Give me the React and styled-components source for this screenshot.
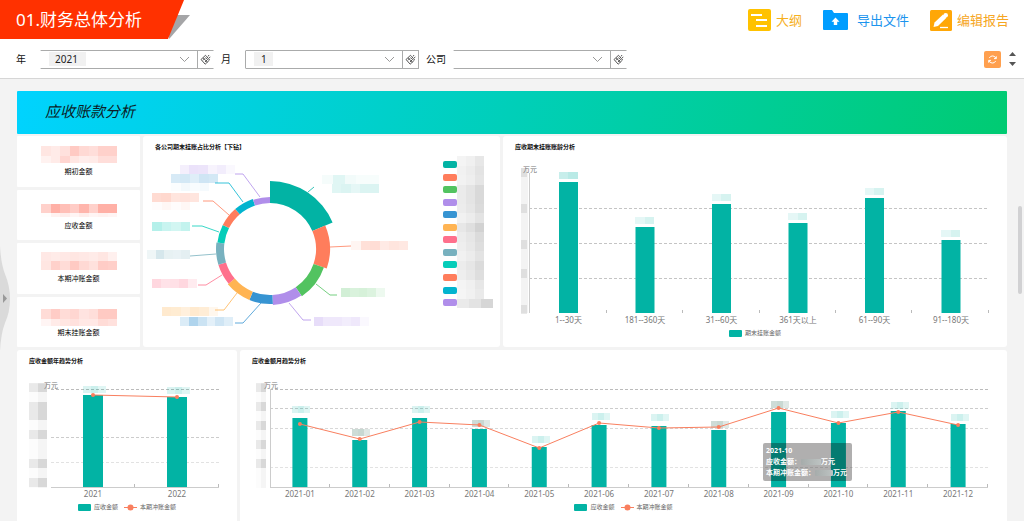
import styled, { createGlobalStyle } from 'styled-components';

const TEAL = '#02b3a4';
const CORAL = '#f97f5f';

const GlobalStyle = createGlobalStyle`
  * {
    box-sizing: border-box;
  }

  body {
    margin: 0;
    overflow: hidden;
    background: #f3f3f3;
    color: #111;
    font-family: "Noto Sans", "Noto Sans CJK SC", sans-serif;
  }

  button,
  select {
    font-family: inherit;
  }
`;

const Page = styled.div`
  position: relative;
  height: 100vh;
  overflow: hidden;
`;

const Head = styled.header`
  background: #fff;
  border-bottom: 1px solid #d6d6d6;
`;

const TitleBar = styled.div`
  display: flex;
  justify-content: space-between;
  height: 40px;
`;

const Ribbon = styled.div`
  position: relative;
  height: 39px;
  padding-right: 6px;

  &::before {
    content: '';
    position: absolute;
    right: 0;
    bottom: 0;
    width: 22px;
    height: 24px;
    background: #a5a5a7;
    clip-path: polygon(0 0, 100% 0, 5% 100%);
  }
`;

const Title = styled.h1`
  position: relative;
  height: 100%;
  margin: 0;
  padding: 0 42px 0 16px;
  background: #ff3100;
  clip-path: polygon(0 0, 100% 0, calc(100% - 16px) 100%, 0 100%);
  color: #fff;
  font-size: 17px;
  font-weight: 400;
  line-height: 39px;
  white-space: nowrap;
`;

const Actions = styled.nav`
  display: flex;
  align-items: center;
  gap: 21px;
  padding-right: 15px;
`;

const Action = styled.button`
  display: flex;
  align-items: center;
  gap: ${p => p.$gap || 5}px;
  padding: 0;
  border: 0;
  background: none;
  color: ${p => p.$color};
  font-size: 13px;
  line-height: 20px;
  white-space: nowrap;
`;

const Filters = styled.form`
  display: flex;
  align-items: center;
  gap: 7px;
  height: 38px;
  padding: 0 8px 0 16px;
`;

const Field = styled.div`
  display: flex;
  align-items: center;
`;

const FieldLabel = styled.label`
  min-width: 17px;
  margin-right: 7px;
  font-size: 10px;
  line-height: 18px;
`;

const SelectBox = styled.div`
  display: grid;
  align-items: center;
  width: 158px;

  > * {
    grid-area: 1 / 1;
  }

  > svg {
    justify-self: end;
    margin-right: 8px;
    pointer-events: none;
  }
`;

const Select = styled.select`
  appearance: none;
  width: 100%;
  height: 19px;
  padding: 0 20px 0 ${p => p.$inset}px;
  border: 1px solid #aaabab;
  border-left-color: ${p => (p.$open ? 'transparent' : '#aaabab')};
  border-radius: 1px;
  background: linear-gradient(#f1f1f1, #f1f1f1) 8px center / ${p => p.$chip}px 14px no-repeat #fff;
  color: #222;
  font-size: 10px;
`;

const ClearButton = styled.button`
  display: grid;
  place-items: center;
  width: 17px;
  height: 19px;
  margin-left: -1px;
  padding: 0;
  border: 1px solid #aaabab;
  border-right-color: ${p => (p.$open ? 'transparent' : '#aaabab')};
  background: #fff;
`;

const FilterTools = styled.div`
  display: flex;
  align-items: center;
  gap: 8px;
  margin-left: auto;
`;

const RefreshButton = styled.button`
  display: grid;
  place-items: center;
  width: 17px;
  height: 17px;
  padding: 0;
  border: 0;
  border-radius: 2px;
  background: #ffa04f;
`;

const SortButton = styled.button`
  display: grid;
  padding: 0;
  border: 0;
  background: none;
`;

const Main = styled.main`
  padding: 12px 17px 0;
`;

const Banner = styled.h2`
  height: 43px;
  margin: 0 0 2px;
  padding-left: 28px;
  border-radius: 1px;
  background: linear-gradient(110deg, #00d3ff, #00cb72);
  color: #0c1c26;
  font-size: 15px;
  font-style: italic;
  font-weight: 400;
  line-height: 41px;
`;

const TopRow = styled.div`
  display: grid;
  grid-template-columns: 123fr 357fr 504fr;
  gap: 3px;
  margin-bottom: 3px;
`;

const BottomRow = styled.div`
  display: grid;
  grid-template-columns: 220fr 767fr;
  gap: 3px;
`;

const Panel = styled.section`
  min-width: 0;
  min-height: ${p => p.$minHeight || 0}px;
  border-radius: 3px;
  background: #fff;
`;

const PanelTitle = styled.h3`
  height: 20px;
  margin: 0;
  padding: 4px 12px 0;
  font-size: 6px;
  font-weight: 700;
  line-height: 14px;
`;

const KpiColumn = styled.div`
  display: grid;
  grid-auto-rows: 1fr;
  gap: 3px;
`;

const KpiCard = styled.section`
  display: flex;
  flex-direction: column;
  align-items: center;
  padding-top: 8px;
  border-radius: 1px;
  background: #fff;
`;

const KpiLabel = styled.p`
  margin: 1px 0 0;
  color: #000;
  font-size: 7px;
  line-height: 12px;
`;

const ChartBox = styled.div`
  position: relative;
`;

const Chart = styled.svg`
  display: block;
  width: 100%;
  height: auto;
`;

const AxisText = styled.text`
  fill: #777;
  font-size: ${p => p.$size || 8}px;
`;

const Legend = styled.ul`
  display: flex;
  justify-content: center;
  gap: 6px;
  margin: 0;
  padding: 0;
  list-style: none;
`;

const LegendItem = styled.li`
  display: flex;
  align-items: center;
  gap: 3px;
  color: #666;
  font-size: 6px;
  line-height: 14px;
`;

const Swatch = styled.span`
  width: 13px;
  height: 7px;
  border-radius: 1px;
  background: ${TEAL};
`;

const Tooltip = styled.div`
  position: absolute;
  top: 73px;
  right: 155px;
  width: 89px;
  padding: 2px 3px 3px;
  border-radius: 2px;
  background: rgba(10, 5, 5, .32);
  color: #fff;
  font-size: 7px;
  font-weight: 700;
  line-height: 11px;
  white-space: nowrap;
`;

const TooltipRow = styled.div`
  display: flex;
  align-items: center;
`;

const Redacted = styled.span`
  width: ${p => p.$width}px;
  height: 6px;
  border-radius: 1px;
  background: linear-gradient(90deg, #a6acab, #bdc3c2);
`;

const ScrollThumb = styled.div`
  position: absolute;
  top: 206px;
  right: 2px;
  width: 4px;
  height: 88px;
  border-radius: 2px;
  background: #d1d1d3;
`;

const DrawerHandle = styled.button`
  position: absolute;
  top: 246px;
  left: 0;
  padding: 0;
  border: 0;
  background: none;

  svg {
    display: block;
  }
`;

const OutlineIcon = () => (
  <svg width="23" height="22" viewBox="0 0 23 22">
    <rect width="23" height="22" rx="2" fill="#ffc200" />
    <path d="M3 6h11M8 11h11M8 17h11" stroke="#fff" strokeWidth="2" />
  </svg>
);

const ExportIcon = () => (
  <svg width="25" height="20" viewBox="0 0 25 20">
    <path d="M1 0h8l2 3h13q1 0 1 1v15q0 1-1 1H1q-1 0-1-1V1q0-1 1-1z" fill="#009dff" />
    <path d="M12.500 7.500l4 4.200h-2.300V15h-3.400v-3.300H8.500z" fill="#fff" />
  </svg>
);

const EditIcon = () => (
  <svg width="22" height="21" viewBox="0 0 22 21">
    <rect width="22" height="21" rx="1.500" fill="#ffa707" />
    <path d="M3.500 17l1-4.500L13 4.500l3.500 3.300L8 16z" fill="#fff" />
    <circle cx="15.700" cy="5.200" r="2.300" fill="#fff" />
    <path d="M10 17.500h8" stroke="#fff" strokeWidth="1.300" />
  </svg>
);

const Chevron = () => (
  <svg width="11" height="7" viewBox="0 0 11 7">
    <path d="M1 1l4.500 4.500L10 1" fill="none" stroke="#999" />
  </svg>
);

const BroomIcon = () => (
  <svg width="11" height="11" viewBox="0 0 11 11" fill="none" stroke="#444" strokeWidth=".9">
    <path d="M8 2.500L9 1M9 4l1.300-1M1 5.500l4.500-4.200 1 1.200 2 2L9.500 6 5.200 10.200zM3 3.800l4.500 4.400M3 6.300l2-2M5 8l2-2M5.500 3.500L8 5.800" />
  </svg>
);

const RefreshIcon = () => (
  <svg width="9" height="9" viewBox="0 0 9 9" fill="none" stroke="#fff">
    <path d="M8 3.500A3.600 3.600 0 0 0 1.300 3M1 5.500a3.600 3.600 0 0 0 6.700.5" />
    <path d="M8.300 1.300v2.300H6M.7 7.700V5.400H3" />
  </svg>
);

const SortIcon = () => (
  <svg width="7" height="14" viewBox="0 0 7 14" fill="#555">
    <path d="M0 4l3.500-4L7 4zM0 10h7l-3.500 4z" />
  </svg>
);

// pixelated strip that stands in for a masked value
const Mosaic = ({ x, y, w, h = 9, color, shades = [.1, .2, .14, .2, .1] }) => (
  <g fill={color} shapeRendering="crispEdges">
    {shades.map((s, i) => (
      <rect key={i} x={x + (w / shades.length) * i} y={y} width={w / shades.length} height={h} opacity={s} />
    ))}
  </g>
);

const kpis = [
  { label: '期初金额', rows: [[2, 10, [.2, .16, .24, .42, .3, .26, .36, .36]], [12, 7, [.1, .16, .32, .2, .14, .16, .26, .26]]] },
  { label: '应收金额', rows: [[6, 9, [.36, .62, .5, .4, .58, .36, .62, .62]], [15, 4, [.02, .1, .14, .08, .14, .08, .1, .08]]] },
  { label: '本期冲账金额', rows: [[1, 9, [.18, .16, .18, .2, .18, .16, .2, .12]], [10, 9, [.2, .36, .28, .42, .3, .24, .4, .38]]] },
  { label: '期末挂账金额', rows: [[4, 10, [.28, .4, .28, .32, .22, .26, .42, .42]], [14, 7, [.08, .16, .2, .24, .18, .18, .28, .24]]] },
];

const slices = [
  { to: 67, r: 68, color: '#02b3a4', line: '165,36 171,31' },
  { to: 109, r: 60, color: '#ff7d5c', line: '187,91 208,90' },
  { to: 146, r: 57, color: '#52c360', line: '173,128 187,139 194,139' },
  { to: 177, r: 56, color: '#b08eea', line: '146,147 160,164 168,164' },
  { to: 202, r: 55, color: '#3794d2', line: '118,147 100,167 92,167' },
  { to: 230, r: 55, color: '#ffb453', line: '94,137 81,154 72,154' },
  { to: 253, r: 54, color: '#ff708c', line: '79,119 63,129 55,129' },
  { to: 277, r: 54, color: '#78b1bf', line: '73,98 47,100' },
  { to: 297, r: 53, color: '#05cdb9', line: '76,76 59,70 49,70' },
  { to: 319, r: 53, color: '#ff7d5c', line: '86,59 70,45 60,45' },
  { to: 341, r: 53, color: '#02b4cf', line: '100,46 86,27 72,27' },
  { to: 360, r: 52, color: '#b08eea', line: '117,41 100,18 92,18' },
];

const sliceLabels = [
  { x: 179, y: 19, w: 57, color: '#02b3a4', shades: [.04, .12, .05, .03, .03] },
  { x: 189, y: 28, w: 47, color: '#02b3a4', shades: [.12, .14, .1, .14, .14] },
  { x: 208, y: 85, w: 57, color: '#ff7d5c', shades: [.08, .24, .26, .16, .2, .18] },
  { x: 198, y: 132, w: 44, color: '#52c360', shades: [.26, .22, .24, .2, .1] },
  { x: 171, y: 161, w: 55, color: '#b08eea', shades: [.3, .2, .2, .16, .2, .06] },
  { x: 37, y: 161, w: 53, color: '#3794d2', shades: [.18, .4, .26, .14, .24, .16] },
  { x: 19, y: 151, w: 56, color: '#ffb453', shades: [.28, .26, .2, .28, .24, .1] },
  { x: 9, y: 123, w: 45, color: '#ff708c', shades: [.28, .2, .22, .28, .14] },
  { x: 4, y: 94, w: 43, color: '#78b1bf', shades: [.12, .3, .18, .16, .2] },
  { x: 9, y: 66, w: 38, color: '#05cdb9', shades: [.3, .22, .18, .24] },
  { x: 9, y: 37, w: 47, color: '#ff7d5c', shades: [.28, .3, .2, .22, .2] },
  { x: 9, y: 46, w: 38, h: 8, color: '#ff7d5c', shades: [.02, .06, .02, .06] },
  { x: 28, y: 18, w: 47, color: '#3794d2', shades: [.2, .22, .16, .24, .22] },
  { x: 28, y: 27, w: 38, h: 8, color: '#3794d2', shades: [.02, .06, .03, .05] },
  { x: 37, y: 9, w: 55, color: '#b08eea', shades: [.14, .26, .24, .1, .16, .06] },
];

const legendShades = [.16, .2, .18, .28, .28, .26, .2, .34, .26, .24, .2, .26, .24, .16, .14, .3];

const polar = (deg, r) => {
  const a = (deg * Math.PI) / 180;
  return `${127 + r * Math.sin(a)} ${93 - r * Math.cos(a)}`;
};

const arc = (from, to, r) =>
  `M${polar(from, r)} A${r} ${r} 0 0 1 ${polar(to, r)} L${polar(to, 46)} A46 46 0 0 0 ${polar(from, 46)}Z`;

const RoseChart = () => (
  <Chart viewBox="0 0 357 191" role="img" aria-label="各公司期末挂账占比分析">
    {sliceLabels.map((l, i) => <Mosaic key={i} {...l} />)}
    {slices.map((s, i) => (
      <g key={s.to}>
        <path d={arc(i ? slices[i - 1].to : 0, s.to, s.r)} fill={s.color} />
        <polyline points={s.line} fill="none" stroke={s.color} strokeWidth=".8" />
        <rect x="300" y={Math.round(5 + i * 12.55)} width="14" height="7" rx="2" fill={s.color} />
      </g>
    ))}
    {legendShades.map((s, i) => (
      <Mosaic
        key={i}
        x={314}
        y={i * 9.5}
        w={i === 15 ? 36 : 27}
        h={9.5}
        color="#888"
        shades={[s * .6, s * .8, s + .04]}
      />
    ))}
  </Chart>
);

const ages = [
  { name: '1--30天', top: 26 },
  { name: '181--360天', top: 71 },
  { name: '31--60天', top: 48 },
  { name: '361天以上', top: 67 },
  { name: '61--90天', top: 42 },
  { name: '91--180天', top: 84 },
];

const AgeChart = () => (
  <Chart viewBox="-1 0 504 170" role="img" aria-label="应收期末挂账账龄分析">
    {[52, 87, 122].map(y => (
      <path key={y} d={`M25 ${y}.5H484`} stroke="#c4c4c4" strokeDasharray="3 2" />
    ))}
    <path d="M25.5 17V157" stroke="#ccc" />
    <Mosaic x={17} y={12} w={7} h={145} color="#999" shades={[.12]} />
    {[12, 48, 84, 113, 149].map(y => <Mosaic key={y} x={17} y={y} w={6} color="#999" shades={[.22]} />)}
    <AxisText x="19" y="16" $size={7}>万元</AxisText>
    {ages.map((a, i) => {
      const cx = 64.5 + i * 76.5;
      return (
        <g key={a.name}>
          <rect x={cx - 9.5} y={a.top} width="19" height={157 - a.top} fill={TEAL} />
          <Mosaic x={cx - 10} y={a.top - 10} w={19} h={7} color={TEAL} shades={i ? [.1, .16] : [.22, .28]} />
          <path d={`M${Math.round(102 + i * 76.3)}.5 154v3`} stroke="#bbb" />
          <AxisText x={cx} y="167" textAnchor="middle">{a.name}</AxisText>
        </g>
      );
    })}
  </Chart>
);

const years = [
  { name: '2021', top: 25, line: 25, label: 16 },
  { name: '2022', top: 27, line: 27, label: 17 },
];

const months = [
  { name: '2021-01', top: 48, line: 54, label: 36 },
  { name: '2021-02', top: 70, line: 69, label: 59, gray: true },
  { name: '2021-03', top: 48, line: 52, label: 36 },
  { name: '2021-04', top: 59, line: 55, label: 50, gray: true },
  { name: '2021-05', top: 77, line: 78, label: 66 },
  { name: '2021-06', top: 55, line: 53, label: 43 },
  { name: '2021-07', top: 56, line: 58, label: 44 },
  { name: '2021-08', top: 60, line: 57, label: 51, gray: true },
  { name: '2021-09', top: 42, line: 38, label: 31, gray: true },
  { name: '2021-10', top: 53, line: 53, label: 41 },
  { name: '2021-11', top: 41, line: 42, label: 32 },
  { name: '2021-12', top: 54, line: 55, label: 44 },
];

const TrendChart = ({ label, width, left, right, bar, grid, data, masks, maskX, maskW, unitX, axis }) => {
  const step = (right - left) / data.length;
  const cx = i => left + step * (i + .5);
  return (
    <Chart viewBox={`0 0 ${width} 130`} role="img" aria-label={label}>
      {grid.map(([y, color]) => (
        <path key={y} d={`M${left} ${y}.5H${right}`} stroke={color} strokeDasharray="3 2" />
      ))}
      {axis && <path d={`M${left}.5 19V117`} stroke="#ccc" />}
      <path d={`M${left} 117.5H${right}`} stroke="#ccc" />
      <AxisText x={unitX} y="18" $size={7}>万元</AxisText>
      <Mosaic x={maskX} y={14} w={maskW} h={104} color="#999" shades={[.03, .1]} />
      {masks.map(y => <Mosaic key={y} x={maskX} y={y} w={maskW} color="#888" shades={[.16, .26]} />)}
      {data.map((d, i) => (
        <g key={d.name}>
          <rect x={cx(i) - bar / 2} y={d.top} width={bar} height={117 - d.top} fill={TEAL} />
          <Mosaic
            x={cx(i) - bar / 2}
            y={d.label}
            w={bar + 3}
            h={7}
            color={d.gray ? '#5d8c7c' : TEAL}
            shades={d.gray ? [.3, .34, .2] : [.14, .2, .12]}
          />
          <path d={`M${Math.round(cx(i) + step / 2) - 1}.5 114v3`} stroke="#bbb" />
          <AxisText x={cx(i)} y="127" textAnchor="middle">{d.name}</AxisText>
        </g>
      ))}
      <polyline points={data.map((d, i) => `${cx(i)},${d.line}`).join(' ')} fill="none" stroke={CORAL} />
      {data.map((d, i) => <circle key={d.name} cx={cx(i)} cy={d.line} r="2" fill={CORAL} />)}
    </Chart>
  );
};

const TrendLegend = () => (
  <Legend>
    <LegendItem><Swatch />应收金额</LegendItem>
    <LegendItem>
      <svg width="13" height="7" viewBox="0 0 13 7">
        <path d="M0 3.500h13" stroke={CORAL} />
        <circle cx="6.500" cy="3.500" r="3" fill={CORAL} />
      </svg>
      本期冲账金额
    </LegendItem>
  </Legend>
);

const FilterField = ({ id, label, value, chip, inset, openLeft, openRight }) => (
  <Field>
    <FieldLabel htmlFor={id}>{label}</FieldLabel>
    <SelectBox>
      <Select id={id} defaultValue={value} $chip={chip} $inset={inset} $open={openLeft}>
        <option value={value}>{value}</option>
      </Select>
      <Chevron />
    </SelectBox>
    <ClearButton type="button" aria-label={`清除${label}`} $open={openRight}>
      <BroomIcon />
    </ClearButton>
  </Field>
);

const App = () => (
  <>
    <GlobalStyle />
    <Page>
      <Head>
        <TitleBar>
          <Ribbon>
            <Title>01.财务总体分析</Title>
          </Ribbon>
          <Actions>
            <Action type="button" $color="#f6b01e"><OutlineIcon />大纲</Action>
            <Action type="button" $color="#1b94ee" $gap={9}><ExportIcon />导出文件</Action>
            <Action type="button" $color="#f6a623"><EditIcon />编辑报告</Action>
          </Actions>
        </TitleBar>
        <Filters>
          <FilterField id="year" label="年" value="2021" chip={37} inset={14} openLeft openRight />
          <FilterField id="month" label="月" value="1" chip={19} inset={15} />
          <FilterField id="company" label="公司" value="" chip={0} inset={14} openLeft openRight />
          <FilterTools>
            <RefreshButton type="button" aria-label="刷新"><RefreshIcon /></RefreshButton>
            <SortButton type="button" aria-label="展开"><SortIcon /></SortButton>
          </FilterTools>
        </Filters>
      </Head>

      <Main>
        <Banner>应收账款分析</Banner>
        <TopRow>
          <KpiColumn>
            {kpis.map(k => (
              <KpiCard key={k.label}>
                <svg width="76" height="21" viewBox="0 0 76 21">
                  {k.rows.map(([y, h, shades]) => (
                    <Mosaic key={y} x={0} y={y} w={76} h={h} color="#ff8070" shades={shades} />
                  ))}
                </svg>
                <KpiLabel>{k.label}</KpiLabel>
              </KpiCard>
            ))}
          </KpiColumn>
          <Panel>
            <PanelTitle>各公司期末挂账占比分析【下钻】</PanelTitle>
            <RoseChart />
          </Panel>
          <Panel>
            <PanelTitle>应收期末挂账账龄分析</PanelTitle>
            <AgeChart />
            <Legend>
              <LegendItem><Swatch />期末挂账金额</LegendItem>
            </Legend>
          </Panel>
        </TopRow>
        <BottomRow>
          <Panel $minHeight={200}>
            <PanelTitle>应收金额年趋势分析</PanelTitle>
            <TrendChart
              label="应收金额年趋势分析"
              width={220}
              left={34}
              right={202}
              bar={20}
              grid={[[19, '#bbb'], [67, '#ccc'], [92, '#e2e2e2']]}
              data={years}
              masks={[13, 32, 41, 60, 89, 108]}
              maskX={12}
              maskW={18}
              unitX={27}
            />
            <TrendLegend />
          </Panel>
          <Panel $minHeight={200}>
            <PanelTitle>应收金额月趋势分析</PanelTitle>
            <ChartBox>
              <TrendChart
                label="应收金额月趋势分析"
                width={767}
                left={30}
                right={748}
                bar={15}
                grid={[[19, '#bbb'], [38, '#ccc'], [58, '#d8d8d8'], [97, '#e2e2e2']]}
                data={months}
                masks={[13, 32, 51, 70, 89]}
                maskX={16}
                maskW={10}
                unitX={24}
                axis
              />
              <Tooltip>
                <TooltipRow>2021-10</TooltipRow>
                <TooltipRow>应收金额：<Redacted $width={20} />万元</TooltipRow>
                <TooltipRow>本期冲账金额：<Redacted $width={18} />万元</TooltipRow>
              </Tooltip>
            </ChartBox>
            <TrendLegend />
          </Panel>
        </BottomRow>
      </Main>

      <ScrollThumb />
      <DrawerHandle type="button" aria-label="展开目录">
        <svg width="10" height="105" viewBox="0 0 10 105">
          <path d="M0 0Q1 18 5 28Q10 40 10 53Q10 66 5 77Q1 87 0 105z" fill="#dadada" />
          <path d="M3 48l4 4.500L3 57z" fill="#999" />
        </svg>
      </DrawerHandle>
    </Page>
  </>
);

export default App;
